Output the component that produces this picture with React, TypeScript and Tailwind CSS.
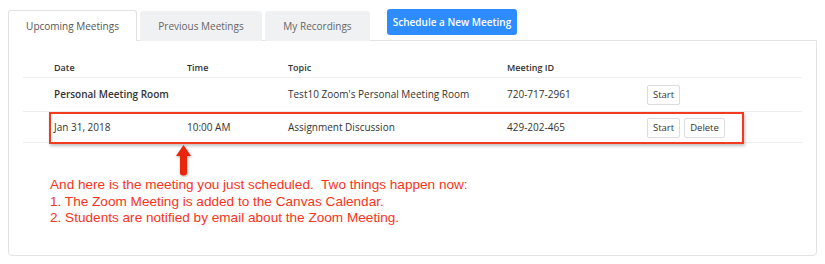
import React from "react";

const rows = [
  { date: "Personal Meeting Room", time: "", topic: "Test10 Zoom's Personal Meeting Room", id: "720-717-2961", bold: true, del: false },
  { date: "Jan 31, 2018", time: "10:00 AM", topic: "Assignment Discussion", id: "429-202-465", bold: false, del: true },
];

function SmallButton({ children }: { children: React.ReactNode }) {
  return (
    <button className="h-[20px] rounded-[2px] border border-[#dcdcdc] bg-white px-[5px] text-[9.5px] leading-none text-[#333]">
      {children}
    </button>
  );
}

export default function App() {
  return (
    <div className="relative h-[264px] w-[825px] bg-white font-['Open_Sans',sans-serif] text-[#333]">
      {/* Tabs */}
      <div className="flex items-end gap-[3px] px-[8px] pt-[9px]">
        <div className="relative z-10 -mb-px flex h-[31px] w-[129px] items-center justify-center rounded-t-[3px] border border-b-0 border-[#e3e3e3] bg-white text-[10px] text-[#555]">
          Upcoming Meetings
        </div>
        <div className="-mb-px flex h-[30px] w-[122px] items-center justify-center rounded-t-[3px] bg-[#f0f1f3] text-[10px] text-[#666]">
          Previous Meetings
        </div>
        <div className="-mb-px flex h-[30px] w-[105px] items-center justify-center rounded-t-[3px] bg-[#f0f1f3] text-[10px] text-[#666]">
          My Recordings
        </div>
        <button className="mb-[5px] ml-[14px] h-[26px] w-[130px] self-start rounded-[3px] bg-[#2d8cff] text-[10px] font-semibold whitespace-nowrap text-white">
          Schedule a New Meeting
        </button>
      </div>

      {/* Panel */}
      <div className="mx-[8px] h-[216px] rounded-b-[4px] border border-[#e3e3e3] px-[14px]">
        <div className="grid grid-cols-[164px_101px_219px_140px_1fr] border-b border-[#eeeeee] pt-[19px] pb-[2px] text-[9px] font-semibold leading-[15px]">
          <div className="pl-[31px]">Date</div>
          <div>Time</div>
          <div>Topic</div>
          <div>Meeting ID</div>
          <div />
        </div>
        {rows.map((r, i) => (
          <div
            key={r.id}
            className={`grid grid-cols-[164px_101px_219px_140px_1fr] items-center border-b border-[#eeeeee] text-[10px] ${i === 0 ? "h-[34px]" : "h-[31px]"}`}
          >
            <div className={`pl-[31px] ${r.bold ? "font-semibold" : ""}`}>{r.date}</div>
            <div>{r.time}</div>
            <div>{r.topic}</div>
            <div>{r.id}</div>
            <div className="flex gap-[4px] pt-px">
              <SmallButton>Start</SmallButton>
              {r.del && <SmallButton>Delete</SmallButton>}
            </div>
          </div>
        ))}

        <div className="mt-[34px] pl-[27px] font-['Liberation_Sans',Arial,sans-serif] text-[13.6px] leading-[16.5px] text-[#f7341a]">
          <p>And here is the meeting you just scheduled.&nbsp; Two things happen now:</p>
          <p>1. The Zoom Meeting is added to the Canvas Calendar.</p>
          <p>2. Students are notified by email about the Zoom Meeting.</p>
        </div>
      </div>

      {/* Annotation: highlight box */}
      <div className="absolute left-[49px] top-[112px] h-[32px] w-[695px] border-2 border-[#f23a1e] shadow-[1px_2px_3px_rgba(0,0,0,0.25)]" />

      {/* Annotation: arrow */}
      <svg className="absolute left-[174px] top-[144px]" width="19" height="33" viewBox="0 0 19 33">
        <defs>
          <filter id="s" x="-30%" y="-20%" width="160%" height="140%">
            <feDropShadow dx="0.5" dy="1" stdDeviation="0.8" floodOpacity="0.35" />
          </filter>
        </defs>
        <path
          d="M9.5 1 L17 12 L13 12 L13 29 Q13 31.5 9.5 31.5 Q6 31.5 6 29 L6 12 L2 12 Z"
          fill="#e8260e"
          filter="url(#s)"
        />
      </svg>
    </div>
  );
}
